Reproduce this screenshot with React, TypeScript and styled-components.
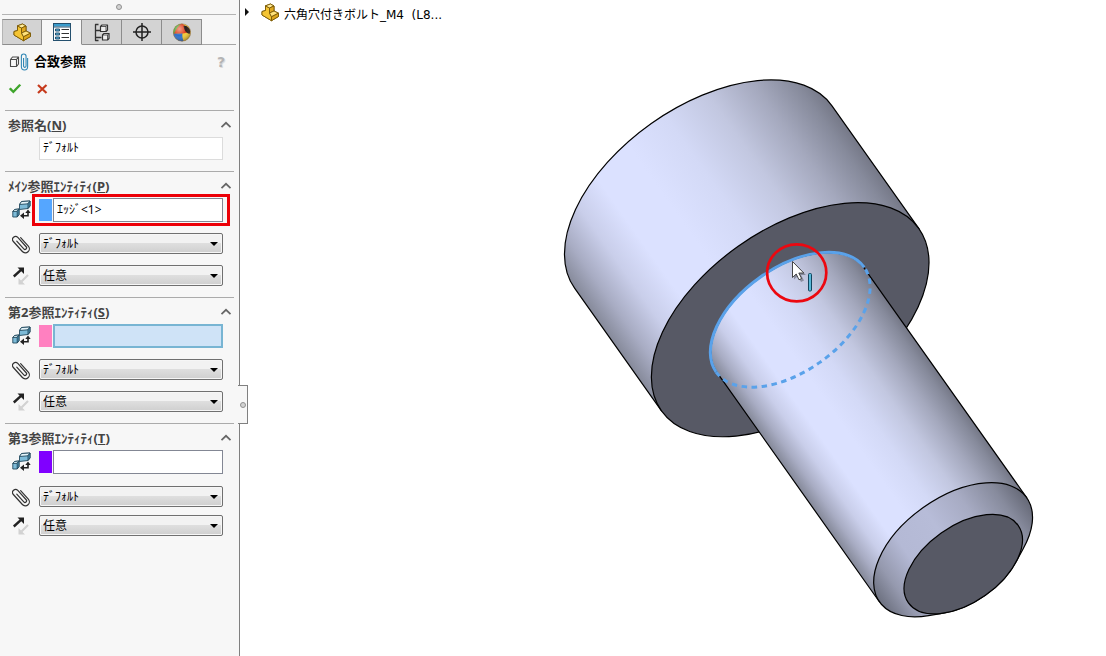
import React from 'react';
import styled, { createGlobalStyle, css } from 'styled-components';

const GlobalStyle = createGlobalStyle`
  *, *::before, *::after { box-sizing: border-box; }
  body {
    margin: 0;
    background: #fff;
    color: #000;
    font: 12px/16px "DejaVu Sans", "Noto Sans CJK JP", sans-serif;
  }
  button, input, select { font: inherit; color: inherit; }
`;

const Page = styled.div`
  display: flex;
  min-height: 100vh;
`;

const Panel = styled.aside`
  position: relative;
  z-index: 1;
  flex: 0 0 240px;
  min-width: 0;
  display: flex;
  flex-direction: column;
  background: #f7f7f7;
  border-right: 1px solid #808080;
`;

const Grip = styled.div`
  display: flex;
  justify-content: center;
  align-items: center;
  height: 15px;
  margin: 0 3px 0 2px;
  border-bottom: 1px solid #b4b4b4;
`;

const Dot = styled.span`
  width: 6px;
  height: 6px;
  border: 1px solid #909090;
  border-radius: 50%;
  background: #d2d2d2;
`;

const Tabs = styled.div`
  display: flex;
  margin: 4px 3px 0 2px;
  height: 26px;
  box-shadow: inset 0 -1px #a6a6a6;
`;

const Tab = styled.button<{ $active?: boolean }>`
  display: flex;
  align-items: center;
  justify-content: center;
  width: 40px;
  padding: 0;
  border: 1px solid #8c8c8c;
  border-left-width: 0;
  background: #d3d3d3;
  &:first-child { border-left-color: #b4b4b4; border-left-width: 1px; }
  ${p => p.$active && css`
    background: #f7f7f7;
    border-bottom-color: #f7f7f7;
  `}
`;

const TitleRow = styled.header`
  display: flex;
  align-items: center;
  gap: 5px;
  height: 34px;
  padding: 0 14px 0 9px;
`;

const Title = styled.h1`
  flex: 1;
  margin: 0;
  font-size: 13px;
  line-height: 16px;
  font-weight: 700;
`;

const IconButton = styled.button`
  display: flex;
  padding: 0;
  border: 0;
  background: none;
`;

const HelpButton = styled(IconButton)`
  color: #b4b4b4;
  font-size: 14px;
  font-weight: 700;
  text-shadow: 1px 1px #ddd;
`;

const Actions = styled.div`
  display: flex;
  align-items: center;
  gap: 14px;
  height: 20px;
  padding-left: 8px;
  margin-bottom: 11px;
`;

const Section = styled.section`
  margin: 0 5px 11px 5px;
  padding: 0 11px 0 3px;
  border-top: 1px solid #ababab;
`;

const SectionHead = styled.button`
  display: flex;
  align-items: center;
  justify-content: space-between;
  width: 100%;
  height: 26px;
  padding: 2px 0 0;
  border: 0;
  background: none;
  color: #444;
  font: 700 13px/16px "Noto Sans", "Noto Sans CJK JP", sans-serif;
  text-align: left;
  & > svg { margin-right: -9px; }
`;

const Row = styled.div`
  position: relative;
  display: grid;
  grid-template-columns: 26px minmax(0, 1fr);
  column-gap: 5px;
  align-items: center;
`;

const Combos = styled.div<{ $tight?: boolean }>`
  display: grid;
  row-gap: ${p => (p.$tight ? 8 : 11)}px;
  margin-top: ${p => (p.$tight ? 12 : 11)}px;
`;

const NameInput = styled.input`
  grid-column: 2;
  width: 100%;
  height: 23px;
  padding: 0 3px 4px;
  border: 1px solid #dcdcdc;
  background: #fff;
`;

const Picker = styled.div`
  display: flex;
  gap: 1px;
  height: 24px;
`;

const Swatch = styled.span<{ $color: string }>`
  flex: 0 0 13px;
  height: 22px;
  align-self: center;
  background: ${p => p.$color};
`;

const PickInput = styled.input<{ $focused?: boolean }>`
  flex: 1;
  min-width: 0;
  padding: 0 3px 1px;
  border: 1px solid #838794;
  background: #fff;
  outline: none;
  font-family: "Noto Sans", "Noto Sans CJK JP", sans-serif;
  ${p => p.$focused && css`
    border: 2px solid #78b5d3;
    background: #cfe3f7;
  `}
`;

const Highlight = styled.span`
  position: absolute;
  inset: -4px -7px -4px 24px;
  border: 3px solid #ec0008;
  pointer-events: none;
`;

const ComboBox = styled.div`
  display: grid;
  align-items: center;
  & > * { grid-area: 1 / 1; }
  & > svg {
    justify-self: end;
    margin-right: 5px;
    pointer-events: none;
  }
`;

const Select = styled.select`
  appearance: none;
  width: 100%;
  height: 21px;
  padding: 0 16px 0 3px;
  border: 1px solid #707070;
  border-radius: 2px;
  background: linear-gradient(#f2f2f2 0 45%, #dedede 50%, #cfcfcf);
  box-shadow: inset 0 0 0 1px #f6f6f6;
`;

const Flyout = styled.button`
  position: absolute;
  left: 238px;
  top: 385px;
  width: 10px;
  height: 39px;
  display: flex;
  align-items: center;
  justify-content: center;
  padding: 0;
  border: 1px solid #808080;
  border-left: 0;
  background: #f7f7f7;
`;

const Viewport = styled.main`
  position: relative;
  flex: 1;
  min-width: 0;
  background: #fff;
`;

const TreeRoot = styled.div`
  position: absolute;
  top: 3px;
  left: 4px;
  display: flex;
  align-items: center;
  gap: 4px;
  height: 24px;
  white-space: pre;
  & > :first-child { margin: 0 7px 6px 0; }
  & > :nth-child(2) { margin-bottom: 5px; }
`;

const Model = styled.svg`
  display: block;
  width: 100%;
  height: 100vh;
`;

const PartIcon = () => (
  <svg width="19" height="19" viewBox="0 0 19 19" aria-hidden="true">
    <g stroke="#7a5a08" strokeWidth=".9" strokeLinejoin="round">
      <path d="M4.500 2.800 9.500 1 13 3V8L17.500 10.200V13.500L10.500 17.700 1 12V8.500L4.500 7.500Z" fill="#f4c433" />
      <path d="M1 8.500 4.500 7.500V2.800L8.500 5V10L10.500 13.800V17.700L1 12Z" fill="#f4c433" />
      <path d="M4.500 2.800 9.500 1 13 3 8.500 5Z" fill="#ffec9a" />
      <path d="M8.500 5 13 3V8L8.500 10Z" fill="#e0a820" />
      <path d="M8.500 10 13 8 17.500 10.200 10.500 13.800Z" fill="#ffe27a" />
      <path d="M10.500 13.800 17.500 10.200V13.500L10.500 17.700Z" fill="#dda51c" />
    </g>
  </svg>
);

const PropertyIcon = () => (
  <svg width="18" height="18" viewBox="0 0 18 18" aria-hidden="true">
    <rect x=".5" y=".5" width="17" height="17" fill="#fff" stroke="#24506e" />
    <path d="M1 1h16v2.500H1z" fill="#3a9ccc" />
    <path d="M1 4h16" stroke="#24506e" />
    <g fill="#58b4dc" stroke="#24506e"><path d="M2.500 6h4v2h-4zM2.500 10h4v2h-4zM2.500 14h4v2h-4z" /></g>
    <path d="M8.500 6.500H16M8.500 10.500H16M8.500 14.500H16" stroke="#333" />
  </svg>
);

const ConfigIcon = () => (
  <svg width="16" height="19" viewBox="0 0 16 19" fill="none" stroke="#333" strokeLinejoin="round" aria-hidden="true">
    <path d="M4.500 1.500h-3v16h3M1.500 7.500h5M1.500 14.500h6" strokeWidth="1.300" />
    <path d="M6.500 3.500 8 2h5.500v5L12 8.500H6.500zM8.500 12l1.500-1.500h5v5L13.500 17h-5z" fill="#eee" strokeWidth="1.200" />
    <path d="M6.500 3.500H12v5M12 3.500 13.500 2M8.500 12h5v5M13.500 12l1.500-1.500" strokeWidth=".8" />
  </svg>
);

const TargetIcon = () => (
  <svg width="18" height="18" viewBox="0 0 18 18" fill="none" stroke="#222" aria-hidden="true">
    <circle cx="9" cy="9" r="6" strokeWidth="1.500" />
    <path d="M9 0v18M0 9h18" strokeWidth="1.500" />
  </svg>
);

const AppearanceIcon = () => (
  <svg width="18" height="19" viewBox="0 0 18 19" aria-hidden="true">
    <defs>
      <radialGradient id="ballShine" cx=".35" cy=".3" r=".75">
        <stop offset="0" stopColor="#fff" stopOpacity=".5" />
        <stop offset=".5" stopColor="#fff" stopOpacity="0" />
        <stop offset="1" stopOpacity=".35" />
      </radialGradient>
      <clipPath id="ball"><circle cx="9" cy="9.500" r="8.700" /></clipPath>
    </defs>
    <g clipPath="url(#ball)">
      <path d="M0 0h18v19H0z" fill="#f3c934" />
      <path d="M0 0H9C6 3 5 6 5 10L0 11z" fill="#4fae3c" />
      <path d="M0 10.500 9.500 10C9 13 9.500 16 11 19H0z" fill="#2e6fc8" />
      <path d="M1 10.500C3 6 6 2 9 0L12 3 16 9.500 9.500 10.500z" fill="#e0431f" />
      <path d="M10.500 3C13 2 16 4 17.500 8L16.500 11C13 10 11 7 10.500 3z" fill="#2a1b18" />
    </g>
    <circle cx="9" cy="9.500" r="8.700" fill="url(#ballShine)" stroke="#8a6b54" strokeWidth=".5" />
  </svg>
);

const CLIP_WIRE = 'M4-5V6.500A4 4 0 0 1-4 6.500V-7A3 3 0 0 1 2-7V5.500A1.600 1.600 0 0 1-1.200 5.500V-5';

const MateRefIcon = () => (
  <svg width="20" height="18" viewBox="0 0 20 18" fill="none" aria-hidden="true">
    <path d="M1.500 6.500 3.500 4h6v7L7.500 13.500h-6zM1.500 6.500h6v7M7.500 6.500l2-2.500" stroke="#4a4a4a" strokeWidth="1.100" strokeLinejoin="round" />
    <path d={CLIP_WIRE} transform="translate(15.500 8.800) scale(.78)" stroke="#2f86b4" strokeWidth="1.400" />
  </svg>
);

const CheckIcon = () => (
  <svg width="14" height="12" viewBox="0 0 14 12" aria-hidden="true">
    <path d="M.8 6 2.800 4.600l2.500 2.600L11.300 1l1.900 1.200L5.400 10.500z" fill="#3fa52c" />
  </svg>
);

const CrossIcon = () => (
  <svg width="12" height="12" viewBox="0 0 12 12" aria-hidden="true">
    <path d="M2 2 10.500 10M10.500 2 2 10" stroke="#c63a1c" strokeWidth="2.200" />
  </svg>
);

const ChevronIcon = () => (
  <svg width="12" height="8" viewBox="0 0 12 8" fill="none" aria-hidden="true">
    <path d="M1.500 6.200 6 1.800l4.500 4.400" stroke="#666" strokeWidth="1.700" />
  </svg>
);

const EntityIcon = () => (
  <svg width="19" height="20" viewBox="0 0 19 20" aria-hidden="true">
    <g stroke="#234a5e" strokeWidth=".9" strokeLinejoin="round">
      <path d="M7.500 4.500 9.500 1.500 18 1v5L16 8.500 7.500 9.500z" fill="#7dbbd8" />
      <path d="M7.500 4.500 9.500 1.500 18 1 16 3.800z" fill="#e4f4fa" />
      <path d="M16 3.800V8.500L18 6V1z" fill="#4d93b3" />
      <path d="M.8 11.500 2.500 9.500 7 9v5.500L5.200 17 .8 17z" fill="#7dbbd8" />
      <path d="M.8 11.500 2.500 9.500 7 9 5.200 11.300z" fill="#e4f4fa" />
      <path d="M5.200 11.300V17L7 14.500V9z" fill="#4d93b3" />
    </g>
    <path d="M16 11v4.800h-5" stroke="#222" strokeWidth="1.600" fill="none" />
    <path d="m8 15.800 4-3.300v6.600zM13.300 13 16 9.500l2.700 3.500z" fill="#222" />
  </svg>
);

const ClipIcon = () => (
  <svg width="18" height="20" viewBox="-9 -10 18 20" fill="none" stroke="#333" strokeWidth="1.200" strokeLinecap="round" aria-hidden="true">
    <path d={CLIP_WIRE} transform="rotate(-42)" />
  </svg>
);

const DirectionIcon = () => (
  <svg width="18" height="20" viewBox="0 0 18 20" aria-hidden="true">
    <path d="M1.800 10.500 9 3.800" stroke="#222" strokeWidth="2.400" />
    <path d="M5.500 1.500H12v6.500z" fill="#222" />
    <path d="m16 9-6.500 6.500" stroke="#d2d2d2" strokeWidth="2.200" />
    <path d="M6.500 12V18.500h6.500z" fill="#d2d2d2" />
  </svg>
);

const ComboArrow = () => (
  <svg width="8" height="4" viewBox="0 0 8 4" aria-hidden="true"><path d="M0 0h8L4 4z" fill="#000" /></svg>
);

const SectionTitle = ({ text, hotkey }: { text: string; hotkey: string }) => (
  <SectionHead type="button" aria-expanded="true">
    <span>{text}(<u>{hotkey}</u>)</span>
    <ChevronIcon />
  </SectionHead>
);

const Centered = styled.span`
  display: flex;
  justify-content: center;
`;

const Combo = ({ icon, label, value }: { icon: React.ReactNode; label: string; value: string }) => (
  <Row>
    <Centered>{icon}</Centered>
    <ComboBox>
      <Select aria-label={label} defaultValue={value}><option>{value}</option></Select>
      <ComboArrow />
    </ComboBox>
  </Row>
);

interface EntityProps {
  title: string;
  hotkey: string;
  color: string;
  value?: string;
  focused?: boolean;
  highlighted?: boolean;
  tight?: boolean;
}

const EntitySection = ({ title, hotkey, color, value = '', focused, highlighted, tight }: EntityProps) => (
  <Section>
    <SectionTitle text={title} hotkey={hotkey} />
    <Row>
      <Centered><EntityIcon /></Centered>
      <Picker>
        <Swatch $color={color} />
        <PickInput $focused={focused} aria-label={title} defaultValue={value} />
      </Picker>
      {highlighted && <Highlight />}
    </Row>
    <Combos $tight={tight}>
      <Combo icon={<ClipIcon />} label="合致タイプ" value="ﾃﾞﾌｫﾙﾄ" />
      <Combo icon={<DirectionIcon />} label="合致の整列状態" value="任意" />
    </Combos>
  </Section>
);

const cylinderStops: [number, string][] = [
  [0, '#757887'], [0.05, '#868a9b'], [0.16, '#a4a8bd'], [0.3, '#c2c7e0'], [0.45, '#d3d9f6'],
  [0.6, '#dbe1ff'], [0.74, '#dbe1ff'], [0.84, '#c9ceea'], [0.93, '#a8acc3'], [1, '#858999'],
];

const chamferStops: [number, string][] = [
  [0, '#666977'], [0.12, '#878b9d'], [0.3, '#a7abc3'], [0.5, '#b7bcd8'],
  [0.72, '#b4b9d5'], [0.88, '#9599ae'], [1, '#6d7180'],
];

const Shade = ({ id, radius, stops }: { id: string; radius: number; stops: [number, string][] }) => (
  <linearGradient id={id} gradientUnits="userSpaceOnUse" x1="0" x2="0" y1={-radius} y2={radius}>
    {stops.map(([at, color]) => <stop key={at} offset={at} stopColor={color} />)}
  </linearGradient>
);

const BoltModel = () => (
  <Model viewBox="240 0 866 656" preserveAspectRatio="xMinYMin meet" role="img" aria-label="六角穴付きボルト">
    <defs>
      <Shade id="headShade" radius={158} stops={cylinderStops} />
      <Shade id="shankShade" radius={90} stops={cylinderStops} />
      <Shade id="chamferShade" radius={90} stops={chamferStops} />
    </defs>
    {/* Local x runs along the bolt axis, from head to tip. */}
    <g transform="translate(790.200 319.700) rotate(54.700)" stroke="#000" strokeWidth="1.200" strokeLinejoin="round">
      <path d="M0-157.700H-150.400A90 157.700 0 0 0-150.400 157.700H0z" fill="url(#headShade)" />
      <ellipse rx="90" ry="157.700" fill="#575965" />
      <path d="M0-90.200H282V90.200H0A51.700 90.200 0 0 1 0-90.200z" fill="url(#shankShade)" />
      <path d="M321.500-58A51.700 90.200 0 1 0 321.500 58L328.700 43.300A38.200 67.200 0 0 0 328.700-43.300z" fill="url(#chamferShade)" />
      <ellipse cx="299.500" rx="38.200" ry="67.200" fill="#575965" />
      <g fill="none" stroke="#5aa2ea">
        <path d="M0 90.700A52 90.700 0 0 1 0-90.700" strokeWidth="3" />
        <path d="M0 90.700A52 90.700 0 0 0 0-90.700" strokeWidth="3" strokeDasharray="5.500 4.500" />
      </g>
    </g>
    <ellipse cx="796.700" cy="272.800" rx="29.600" ry="28.500" fill="none" stroke="#ec0810" strokeWidth="2.700" />
    <rect x="808.500" y="273.500" width="3" height="17.500" rx="1" fill="#58b8d8" stroke="#12455e" />
    <path d="M794 263.500v16l4-3.500 3 6 3-1.500-3-5.500h5z" fill="#000" opacity=".3" stroke="none" />
    <path d="M792.500 261.500v16l3.700-3.500 2.800 5.800 2.600-1.300-2.800-5.500h5z" fill="#fff" stroke="#333" strokeWidth=".9" />
  </Model>
);

export default function App() {
  return (
    <>
      <GlobalStyle />
      <Page>
        <Panel>
          <Grip><Dot /></Grip>
          <Tabs>
            <Tab type="button" aria-label="FeatureManager"><PartIcon /></Tab>
            <Tab type="button" aria-label="PropertyManager" $active><PropertyIcon /></Tab>
            <Tab type="button" aria-label="ConfigurationManager"><ConfigIcon /></Tab>
            <Tab type="button" aria-label="DimXpertManager"><TargetIcon /></Tab>
            <Tab type="button" aria-label="DisplayManager"><AppearanceIcon /></Tab>
          </Tabs>
          <TitleRow>
            <MateRefIcon />
            <Title>合致参照</Title>
            <HelpButton type="button">?</HelpButton>
          </TitleRow>
          <Actions>
            <IconButton type="button" aria-label="OK"><CheckIcon /></IconButton>
            <IconButton type="button" aria-label="キャンセル"><CrossIcon /></IconButton>
          </Actions>
          <Section>
            <SectionTitle text="参照名" hotkey="N" />
            <Row><NameInput aria-label="参照名" defaultValue="ﾃﾞﾌｫﾙﾄ" /></Row>
          </Section>
          <EntitySection title="ﾒｲﾝ参照ｴﾝﾃｨﾃｨ" hotkey="P" color="#55a6ff" value="ｴｯｼﾞ<1>" highlighted />
          <EntitySection title="第2参照ｴﾝﾃｨﾃｨ" hotkey="S" color="#ff80c0" focused />
          <EntitySection title="第3参照ｴﾝﾃｨﾃｨ" hotkey="T" color="#8000ff" tight />
          <Flyout type="button" aria-label="パネルを閉じる"><Dot /></Flyout>
        </Panel>
        <Viewport>
          <BoltModel />
          <TreeRoot>
            <svg width="6" height="8" viewBox="0 0 6 8" aria-hidden="true"><path d="M1 0l4 4-4 4z" fill="#111" /></svg>
            <PartIcon />
            <span>六角穴付きボルト_M4  (L8...</span>
          </TreeRoot>
        </Viewport>
      </Page>
    </>
  );
}
